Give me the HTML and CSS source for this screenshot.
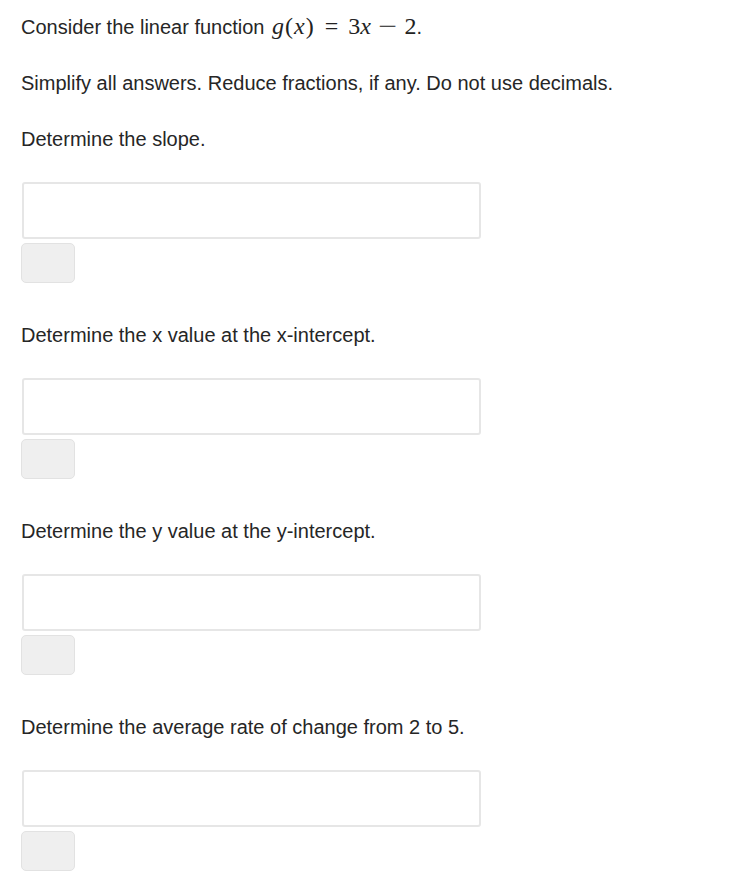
FILE: index.html
```html
<!DOCTYPE html>
<html>
<head>
<meta charset="utf-8">
<link rel="stylesheet" href="styles.css">
</head>
<body>
<div class="page">
  <p class="intro">Consider the linear function <span class="math"><i>g</i><span class="paren">(</span><i>x</i><span class="paren">)</span><span class="op">=</span>3<i>x</i><span class="op minus">−</span>2</span>.</p>
  <p class="note">Simplify all answers. Reduce fractions, if any. Do not use decimals.</p>

  <section class="question">
    <p class="prompt">Determine the slope.</p>
    <div class="answer"></div>
    <div class="btn"></div>
  </section>

  <section class="question">
    <p class="prompt">Determine the x value at the x-intercept.</p>
    <div class="answer"></div>
    <div class="btn"></div>
  </section>

  <section class="question">
    <p class="prompt">Determine the y value at the y-intercept.</p>
    <div class="answer"></div>
    <div class="btn"></div>
  </section>

  <section class="question">
    <p class="prompt">Determine the average rate of change from 2 to 5.</p>
    <div class="answer"></div>
    <div class="btn"></div>
  </section>
</div>
</body>
</html>
```

FILE: styles.css
```css
html, body {
  margin: 0;
  padding: 0;
  background: #fff;
}
.page {
  padding: 12px 21px 0 21px;
  font-family: "Liberation Sans", Arial, sans-serif;
  font-size: 20px;
  color: #262626;
}
p {
  margin: 0;
  line-height: 28px;
}
.intro {
  height: 28px;
}
.math {
  font-family: "Liberation Serif", "Times New Roman", serif;
  font-size: 24px;
  color: #222;
  margin-left: 2px;
}
.math i {
  font-style: italic;
}
.paren {
  margin: 0 1px;
}
.op {
  margin: 0 10px;
}
.minus {
  display: inline-block;
  transform: scaleX(1.4);
}
.note {
  margin-top: 29px;
}
.question {
  display: flex;
  flex-direction: column;
  align-items: flex-start;
}
.question:first-of-type .prompt {
  margin-top: 28px;
}
.prompt {
  margin-top: 38px;
}
.answer {
  margin-top: 29px;
  width: 455px;
  height: 53px;
  border: 2px solid #e6e6e6;
  border-radius: 3px;
  margin-left: 1px;
}
.btn {
  margin-top: 4px;
  width: 52px;
  height: 38px;
  background: #efefef;
  border: 1px solid #e2e2e2;
  border-radius: 5px;
}
```
